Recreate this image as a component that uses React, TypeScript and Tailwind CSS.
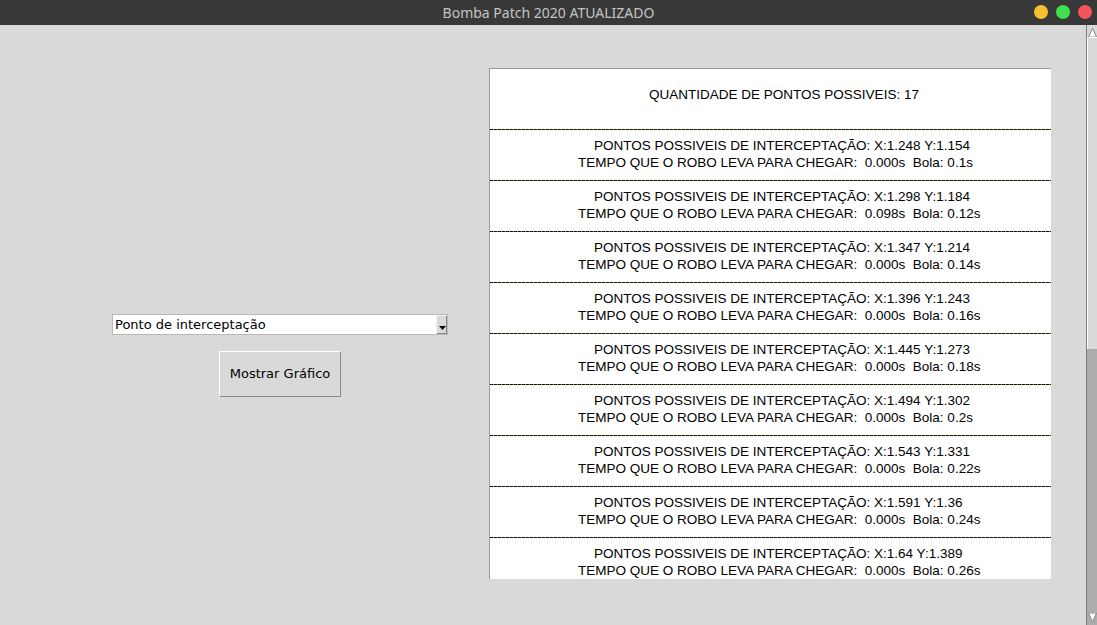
const rows = [
  { x: "1.248", y: "1.154", t: "0.000s", b: "0.1s" },
  { x: "1.298", y: "1.184", t: "0.098s", b: "0.12s" },
  { x: "1.347", y: "1.214", t: "0.000s", b: "0.14s" },
  { x: "1.396", y: "1.243", t: "0.000s", b: "0.16s" },
  { x: "1.445", y: "1.273", t: "0.000s", b: "0.18s" },
  { x: "1.494", y: "1.302", t: "0.000s", b: "0.2s" },
  { x: "1.543", y: "1.331", t: "0.000s", b: "0.22s" },
  { x: "1.591", y: "1.36", t: "0.000s", b: "0.24s" },
  { x: "1.64", y: "1.389", t: "0.000s", b: "0.26s" },
];

function Dashes() {
  return (
    <div className="h-px w-full bg-[repeating-linear-gradient(90deg,#111_0_3px,#b08a3a_3px_4px)]" />
  );
}

export default function App() {
  return (
    <div className="flex h-[625px] w-[1097px] flex-col overflow-hidden bg-[#d9d9d9]">
      {/* title bar */}
      <div className="relative flex h-[25px] shrink-0 items-center justify-center bg-[#383838]">
        <span className="font-['Noto_Sans',sans-serif] text-[14px] text-[#c4c4c4]">
          Bomba Patch 2020 ATUALIZADO
        </span>
        <div className="absolute right-[5px] top-[5px] flex gap-[8px]">
          <span className="h-[14px] w-[14px] rounded-full bg-[#f8c031]" />
          <span className="h-[14px] w-[14px] rounded-full bg-[#3ee04f]" />
          <span className="h-[14px] w-[14px] rounded-full bg-[#f3535a]" />
        </div>
      </div>

      <div className="flex min-h-0 flex-1">
        {/* left pane */}
        <div className="flex w-[489px] shrink-0 flex-col items-start pl-[112px] pt-[289px]">
          <div className="flex h-[21px] w-[336px] items-center border border-[#b8b8b8] bg-white pl-[2px]">
            <span className="flex-1 font-['DejaVu_Sans',sans-serif] text-[13px] leading-none text-black">
              Ponto de interceptação
            </span>
            <div className="flex h-full w-[11px] items-end justify-center border-l border-t border-l-[#f4f4f4] border-t-[#f4f4f4] bg-[#d9d9d9] pb-[3px] shadow-[inset_-1px_-1px_0_#888]">
              <svg width="7" height="5" viewBox="0 0 7 5">
                <path d="M0 0h7L3.5 4z" fill="#000" />
              </svg>
            </div>
          </div>
          <button
            type="button"
            className="ml-[107px] mt-[16px] flex h-[46px] w-[122px] items-center justify-center border border-b-[#8c8c8c] border-l-white border-r-[#8c8c8c] border-t-white bg-[#d9d9d9] font-['DejaVu_Sans',sans-serif] text-[13px] text-black"
          >
            Mostrar Gráfico
          </button>
        </div>

        {/* results panel */}
        <div className="mt-[43px] h-[511px] w-[562px] shrink-0 overflow-hidden border-l border-t border-[#9a9a9a] bg-white font-['Liberation_Sans',Arial,sans-serif] text-[13.5px] text-black">
          <div className="flex w-[588px] flex-col">
            <div className="flex h-[60px] shrink-0 items-center justify-center pb-[8px]">
              QUANTIDADE DE PONTOS POSSIVEIS: 17
            </div>
            {rows.map((r, i) => (
              <div key={i} className="shrink-0">
                <Dashes />
                <div className="flex h-[50px] flex-col items-start pl-[88px] pt-[7px] leading-[17px]">
                  <span className="ml-[16px] whitespace-pre">
                    PONTOS POSSIVEIS DE INTERCEPTAÇÃO: X:{r.x} Y:{r.y}
                  </span>
                  <span className="whitespace-pre">
                    {`TEMPO QUE O ROBO LEVA PARA CHEGAR:  ${r.t}  Bola: ${r.b}`}
                  </span>
                </div>
              </div>
            ))}
          </div>
        </div>

        <div className="flex-1" />

        {/* scrollbar */}
        <div className="flex w-[11px] shrink-0 flex-col border-l border-[#7a7a7a]">
          <div className="flex h-[12px] items-end justify-center bg-[#d9d9d9]">
            <svg width="9" height="10" viewBox="0 0 9 10">
              <path d="M4.5 1L8.5 10H0.5z" fill="#fff" stroke="#888" strokeWidth="1" />
            </svg>
          </div>
          <div className="h-[312px] border-l border-t border-white bg-[#d9d9d9]" />
          <div className="flex-1 bg-[#acacac]" />
          <div className="flex h-[12px] items-start justify-center bg-[#acacac]">
            <svg width="9" height="10" viewBox="0 0 9 10">
              <path d="M0.5 0H8.5L4.5 9z" fill="#fff" stroke="#888" strokeWidth="1" />
            </svg>
          </div>
        </div>
      </div>
    </div>
  );
}
